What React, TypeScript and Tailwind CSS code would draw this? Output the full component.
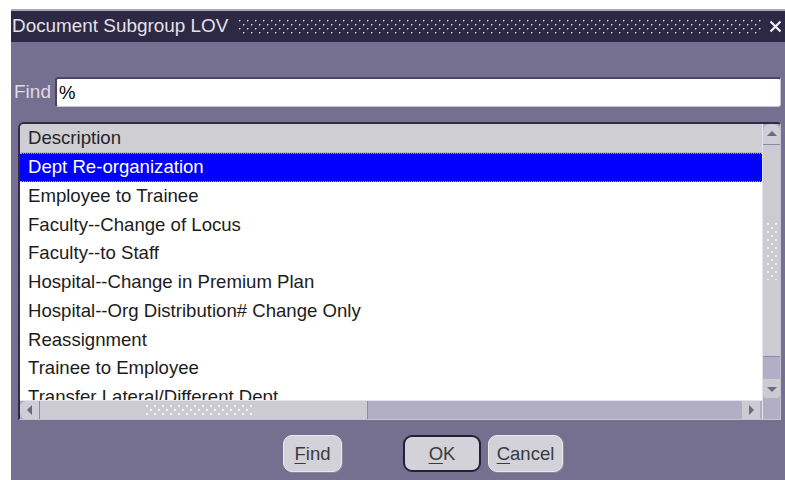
import React from "react";

const rows = [
  "Dept Re-organization",
  "Employee to Trainee",
  "Faculty--Change of Locus",
  "Faculty--to Staff",
  "Hospital--Change in Premium Plan",
  "Hospital--Org Distribution# Change Only",
  "Reassignment",
  "Trainee to Employee",
  "Transfer Lateral/Different Dept",
];

function TitleDots() {
  return (
    <svg className="w-full h-[16px]" aria-hidden>
      <defs>
        <pattern id="tdots" width="8" height="8" patternUnits="userSpaceOnUse">
          <rect x="1" y="1" width="1.5" height="1.5" fill="#d2d0de" />
          <rect x="2.5" y="2.5" width="1" height="1" fill="#0e0b1a" />
          <rect x="5" y="5" width="1.5" height="1.5" fill="#d2d0de" />
          <rect x="6.5" y="6.5" width="1" height="1" fill="#0e0b1a" />
        </pattern>
      </defs>
      <rect width="100%" height="100%" fill="url(#tdots)" />
    </svg>
  );
}

function GripDots({ vertical }: { vertical?: boolean }) {
  const w = vertical ? 12 : 108;
  const h = vertical ? 58 : 12;
  return (
    <svg width={w} height={h} aria-hidden>
      <defs>
        <pattern id={vertical ? "gv" : "gh"} width="8" height="8" patternUnits="userSpaceOnUse">
          <rect x="1" y="1" width="2" height="2" fill="#f2f1f5" />
          <rect x="5" y="5" width="2" height="2" fill="#f2f1f5" />
        </pattern>
      </defs>
      <rect width="100%" height="100%" fill={`url(#${vertical ? "gv" : "gh"})`} />
    </svg>
  );
}

function Arrow({ dir }: { dir: "up" | "down" | "left" | "right" }) {
  const pts = {
    up: "1,7 6,2 11,7",
    down: "1,3 6,8 11,3",
    left: "8,1 3,6 8,11",
    right: "4,1 9,6 4,11",
  }[dir];
  return (
    <svg width="12" height={dir === "up" || dir === "down" ? 10 : 12} aria-hidden>
      <polygon points={pts} fill="#6b6880" />
    </svg>
  );
}

function Btn({
  children,
  w,
  def,
}: {
  children: React.ReactNode;
  w: string;
  def?: boolean;
}) {
  return (
    <div
      className={`${w} h-[37px] flex items-center justify-center rounded-[9px] bg-[#d3d2d8] text-[#3a3a40] text-[18.5px] ${
        def
          ? "border-[2px] border-[#23203a]"
          : "border border-[#e9e8ee] shadow-[1px_1px_0_#8c88a2]"
      }`}
    >
      {children}
    </div>
  );
}

export default function App() {
  return (
    <div className="w-[785px] h-[480px] bg-white pl-[11px] pt-[9px] overflow-hidden font-['Liberation_Sans',Arial,sans-serif]">
      <div className="h-full flex flex-col bg-[#75708f] border-t-2 border-[#aba8bd]">
        {/* title bar */}
        <div className="h-[31px] shrink-0 bg-[#2d2844] flex items-center pl-[1px] pr-[3px]">
          <span className="text-[18.9px] text-[#e2e1ea] leading-none whitespace-nowrap">
            Document Subgroup LOV
          </span>
          <div className="flex-1 ml-[10px] mr-[6px] flex items-center">
            <TitleDots />
          </div>
          <svg width="13" height="13" aria-hidden>
            <path d="M1.5 1.5 L11.5 11.5 M11.5 1.5 L1.5 11.5" stroke="#f0eff4" strokeWidth="2.2" />
          </svg>
        </div>

        {/* find field */}
        <div className="flex items-center mt-[35px] pl-[3px] pr-[4px]">
          <span className="text-[19px] text-[#dddbe6] w-[41px]">Find</span>
          <div className="flex-1 h-[30px] bg-white rounded-[3px] border-t-2 border-l-2 border-[#4a4562] border-r border-b border-r-[#c9c6d6] border-b-[#c9c6d6] flex items-center pl-[2px] text-[18.5px] text-black">
            %
          </div>
        </div>

        {/* list panel */}
        <div className="mt-[15px] ml-[7px] mr-[4px] h-[298px] flex rounded-tl-[6px] rounded-tr-[4px] border-t-2 border-l-2 border-[#2f2a45] border-r border-b border-r-[#c6c3d3] border-b-[#c6c3d3] bg-[#b2aec6] overflow-hidden">
          <div className="flex-1 flex flex-col">
            <div className="h-[29px] shrink-0 bg-[#cfcfd3] border-b border-[#b9b8c0] flex items-center pl-[8px] text-[18.6px] text-[#25252a]">
              Description
            </div>
            <div className="h-[247px] bg-white overflow-hidden">
              {rows.map((r, i) => (
                <div
                  key={r}
                  className={`h-[28.7px] flex items-center pl-[8px] text-[18.6px] whitespace-nowrap ${
                    i === 0
                      ? "bg-[#0000fc] text-white border-y border-dotted border-[#a8aaff]"
                      : "text-[#1c1c1c]"
                  }`}
                >
                  {r}
                </div>
              ))}
            </div>
            {/* horizontal scrollbar */}
            <div className="h-[19px] shrink-0 flex bg-[#b2aec6] border-t border-[#e4e2ec]">
              <div className="w-[20px] flex items-center justify-center bg-[#cfcdd5] rounded-l-[6px] border-r border-[#8e8aa4]">
                <Arrow dir="left" />
              </div>
              <div className="w-[328px] bg-[#cdcbd2] border-r border-[#8e8aa4] flex items-center justify-center pr-[10px]">
                <GripDots />
              </div>
              <div className="flex-1" />
              <div className="w-[18px] flex items-center justify-center bg-[#cdcbd2] mr-[2px]">
                <Arrow dir="right" />
              </div>
            </div>
          </div>
          {/* vertical scrollbar */}
          <div className="w-[18px] shrink-0 flex flex-col bg-[#b2aec6] border-l border-[#e4e2ec]">
            <div className="h-[21px] flex items-center justify-center bg-[#cfcdd5] rounded-t-[7px] border-b border-[#8e8aa4]">
              <Arrow dir="up" />
            </div>
            <div className="h-[212px] bg-[#cdcbd2] border-b border-[#8e8aa4] flex items-center justify-center">
              <GripDots vertical />
            </div>
            <div className="h-[22px]" />
            <div className="h-[19px] flex items-center justify-center bg-[#cdcbd2] rounded-b-[4px]">
              <Arrow dir="down" />
            </div>
            <div className="flex-1" />
          </div>
        </div>

        {/* buttons */}
        <div className="flex items-center mt-[15px] pl-[272px]">
          <Btn w="w-[59px]">
            <span>
              <span className="underline underline-offset-[3px]">F</span>ind
            </span>
          </Btn>
          <div className="ml-[61px]">
            <Btn w="w-[78px]" def>
              <span>
                <span className="underline underline-offset-[3px]">O</span>K
              </span>
            </Btn>
          </div>
          <div className="ml-[7px]">
            <Btn w="w-[75px]">
              <span>
                <span className="underline underline-offset-[3px]">C</span>ancel
              </span>
            </Btn>
          </div>
        </div>
      </div>
    </div>
  );
}
